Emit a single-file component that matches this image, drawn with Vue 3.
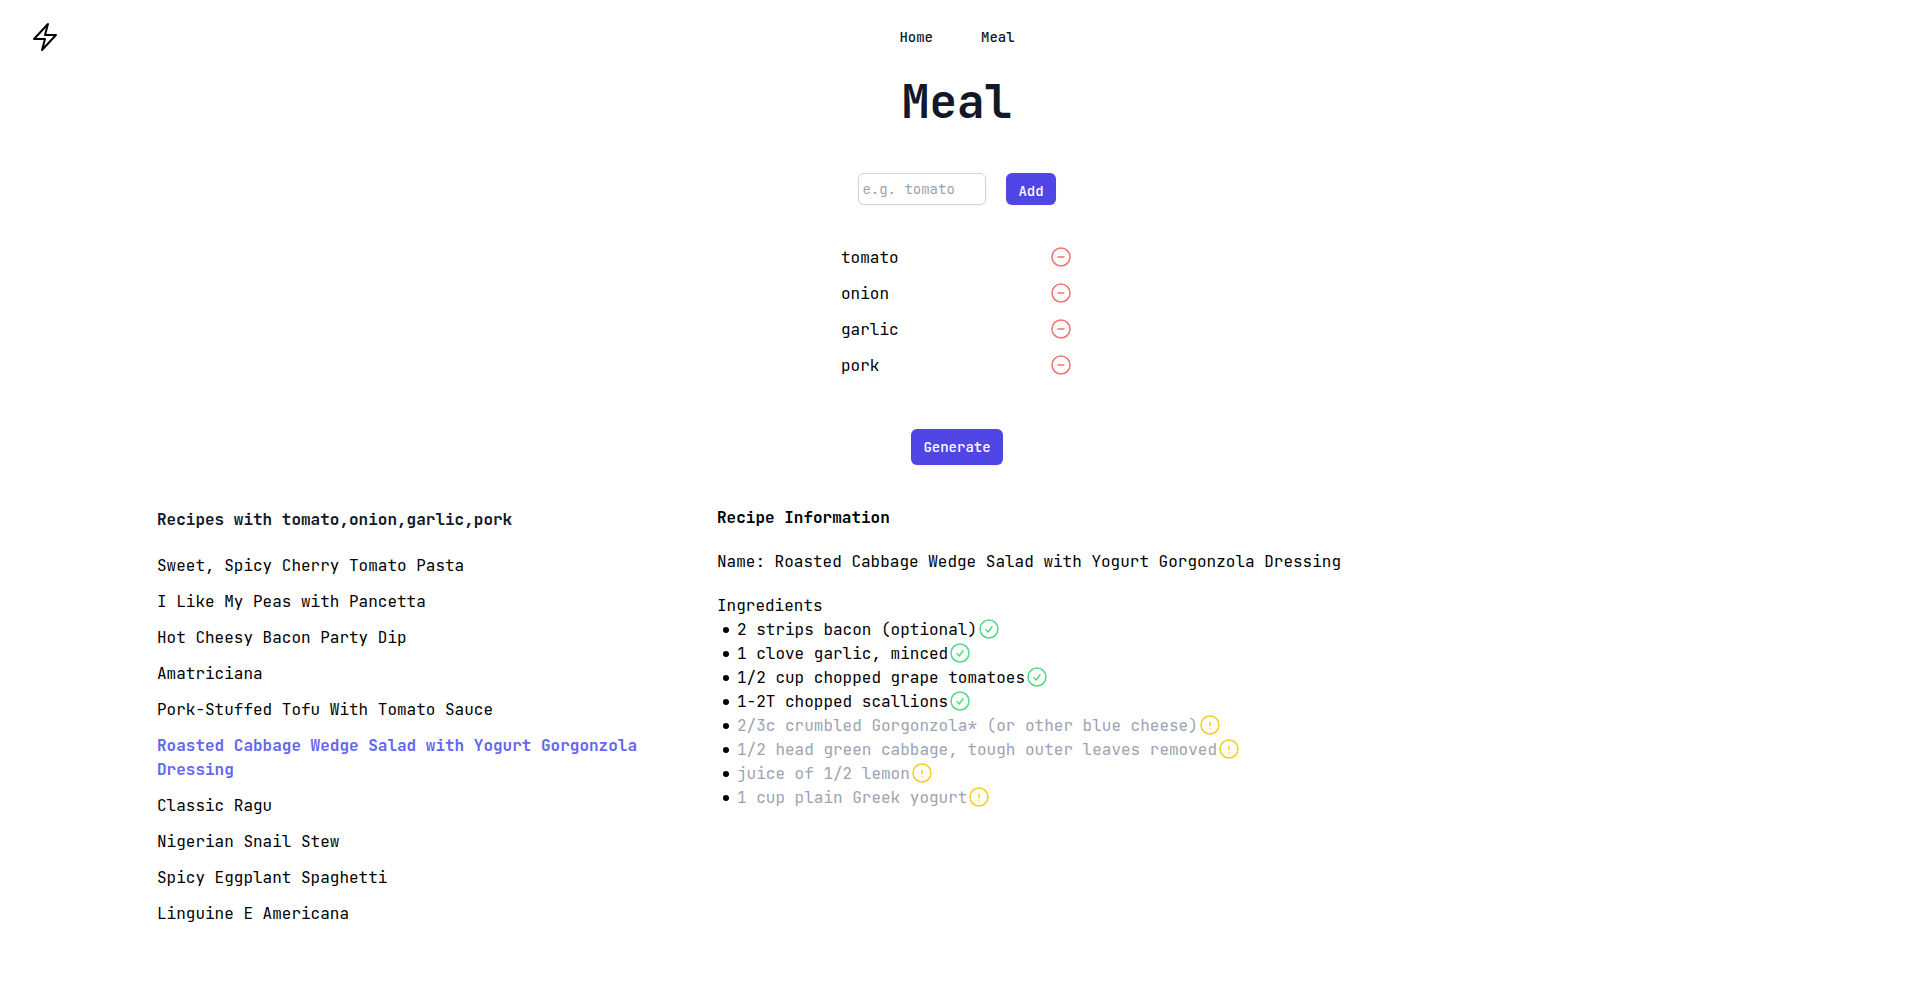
<script setup>
import { ref } from 'vue'

const draft = ref('')
const pantry = ref(['tomato', 'onion', 'garlic', 'pork'])
const searched = ref([...pantry.value])

const recipes = [
  'Sweet, Spicy Cherry Tomato Pasta',
  'I Like My Peas with Pancetta',
  'Hot Cheesy Bacon Party Dip',
  'Amatriciana',
  'Pork-Stuffed Tofu With Tomato Sauce',
  'Roasted Cabbage Wedge Salad with Yogurt Gorgonzola Dressing',
  'Classic Ragu',
  'Nigerian Snail Stew',
  'Spicy Eggplant Spaghetti',
  'Linguine E Americana',
]
const selected = ref(recipes[5])

const ingredients = [
  { text: '2 strips bacon (optional)', owned: true },
  { text: '1 clove garlic, minced', owned: true },
  { text: '1/2 cup chopped grape tomatoes', owned: true },
  { text: '1-2T chopped scallions', owned: true },
  { text: '2/3c crumbled Gorgonzola* (or other blue cheese)', owned: false },
  { text: '1/2 head green cabbage, tough outer leaves removed', owned: false },
  { text: 'juice of 1/2 lemon', owned: false },
  { text: '1 cup plain Greek yogurt', owned: false },
]

function add() {
  const value = draft.value.trim()
  if (value) pantry.value.push(value)
  draft.value = ''
}

function remove(index) {
  pantry.value.splice(index, 1)
}

function generate() {
  searched.value = [...pantry.value]
}
</script>

<template>
  <div class="page">
    <header class="bar">
      <a class="logo" href="#" aria-label="Start page">
        <svg viewBox="0 0 24 24" class="bolt" aria-hidden="true">
          <path d="M3.75 13.5l10.5-11.25L12 10.5h8.25L9.75 21.75 12 13.5H3.75z" />
        </svg>
      </a>
      <nav class="links">
        <a href="#home">Home</a>
        <a href="#meal">Meal</a>
      </nav>
    </header>

    <main>
      <h1>Meal</h1>

      <form class="entry" @submit.prevent="add">
        <input v-model="draft" type="text" placeholder="e.g. tomato" aria-label="Ingredient" />
        <button type="submit" class="primary add">Add</button>
      </form>

      <ul class="pantry">
        <li v-for="(item, index) in pantry" :key="item">
          <span>{{ item }}</span>
          <button type="button" class="remove" :aria-label="`Remove ${item}`" @click="remove(index)">
            <svg viewBox="0 0 24 24" class="icon" aria-hidden="true">
              <path d="M15 12H9m12 0a9 9 0 11-18 0 9 9 0 0118 0z" />
            </svg>
          </button>
        </li>
      </ul>

      <button type="button" class="primary generate" @click="generate">Generate</button>

      <div class="results">
        <section>
          <h2 class="found">Recipes with {{ searched.join(',') }}</h2>
          <ul class="recipes">
            <li v-for="recipe in recipes" :key="recipe">
              <button type="button" :class="{ active: recipe === selected }" @click="selected = recipe">{{ recipe }}</button>
            </li>
          </ul>
        </section>

        <section class="info">
          <h2>Recipe Information</h2>
          <p>Name: {{ selected }}</p>
          <div>
            <h3>Ingredients</h3>
            <ul class="ingredients">
              <li v-for="item in ingredients" :key="item.text">
                <div class="line" :class="{ missing: !item.owned }">
                  <span>{{ item.text }}</span>
                  <svg v-if="item.owned" viewBox="0 0 24 24" class="icon have" aria-hidden="true">
                    <path d="M9 12.75L11.25 15 15 9.75M21 12a9 9 0 11-18 0 9 9 0 0118 0z" />
                  </svg>
                  <svg v-else viewBox="0 0 24 24" class="icon need" aria-hidden="true">
                    <path d="M12 9v3.75m9-.75a9 9 0 11-18 0 9 9 0 0118 0zm-9 3.75h.008v.008H12v-.008z" />
                  </svg>
                </div>
              </li>
            </ul>
          </div>
        </section>
      </div>
    </main>
  </div>
</template>

<style>
body {
  background: #fff;
}
</style>

<style scoped>
.page {
  padding-right: 3px;
  font-family: "JetBrains Mono", "DejaVu Sans Mono", "Liberation Mono", monospace;
  font-size: 16px;
  line-height: 24px;
  color: #000;
}
h1, h2, h3, p, ul {
  margin: 0;
  padding: 0;
}
ul {
  list-style: none;
}
button, input {
  font: inherit;
  margin: 0;
}
button {
  border: 0;
  cursor: pointer;
}
svg {
  display: block;
  fill: none;
  stroke: currentColor;
  stroke-width: 1.5;
  stroke-linecap: round;
  stroke-linejoin: round;
}
.bar {
  display: grid;
  grid-template-columns: 1fr auto 1fr;
  align-items: center;
  padding: 21px 29px;
}
.logo {
  justify-self: start;
  color: #000;
}
.bolt {
  width: 32px;
  height: 32px;
}
.links {
  display: flex;
  gap: 48px;
}
.links a {
  font-size: 14px;
  font-weight: 500;
  color: #111827;
  text-decoration: none;
}
main {
  display: flex;
  flex-direction: column;
  align-items: center;
  padding: 4px 0 40px;
}
h1 {
  font-size: 46px;
  line-height: 48px;
  font-weight: 700;
  color: #111827;
}
.entry {
  display: flex;
  gap: 20px;
  margin-top: 47px;
}
.entry input {
  box-sizing: border-box;
  width: 128px;
  height: 32px;
  padding: 0 3px;
  border: 1px solid #d1d5db;
  border-radius: 6px;
  background: #fff;
  box-shadow: 0 1px 2px rgba(0, 0, 0, 0.05);
  font-size: 14px;
  color: #111827;
}
.entry input::placeholder {
  color: #9ca3af;
  opacity: 1;
}
.primary {
  padding: 8px 12px;
  border-radius: 6px;
  background: #4f46e5;
  box-shadow: 0 1px 2px rgba(0, 0, 0, 0.05);
  color: #fff;
  font-size: 14px;
  line-height: 20px;
  font-weight: 500;
}
.add {
  height: 32px;
  padding: 8px 12px 4px;
}
.pantry {
  display: flex;
  flex-direction: column;
  gap: 12px;
  width: 232px;
  margin-top: 41px;
}
.pantry li {
  display: flex;
  justify-content: space-between;
}
.remove {
  padding: 0;
  background: none;
  color: #f87171;
}
.icon {
  flex: none;
  width: 24px;
  height: 24px;
  margin: -1px 0 1px;
}
.generate {
  margin-top: 51px;
}
.results {
  display: grid;
  grid-template-columns: 35% 1fr;
  width: 100%;
  max-width: 1600px;
  margin-top: 41px;
}
h2, h3 {
  font-size: 16px;
  font-weight: 700;
}
h3 {
  font-weight: 400;
}
.found {
  line-height: 28px;
  color: #111827;
}
.recipes {
  display: flex;
  flex-direction: column;
  gap: 12px;
  margin-top: 20px;
}
.recipes button {
  display: block;
  padding: 0;
  background: none;
  color: #000;
  text-align: left;
}
.recipes .active {
  color: #6366f1;
  font-weight: 700;
}
.info {
  display: flex;
  flex-direction: column;
  gap: 20px;
}
.ingredients {
  list-style: none;
}
.ingredients li {
  display: flex;
  align-items: center;
}
.ingredients li::before {
  content: "";
  width: 6px;
  height: 6px;
  margin: 0 8px 0 6px;
  border-radius: 50%;
  background: #000;
}
.line {
  display: flex;
}
.missing {
  color: #9ca3af;
}
.have {
  color: #4ade80;
}
.need {
  color: #facc15;
}
</style>
